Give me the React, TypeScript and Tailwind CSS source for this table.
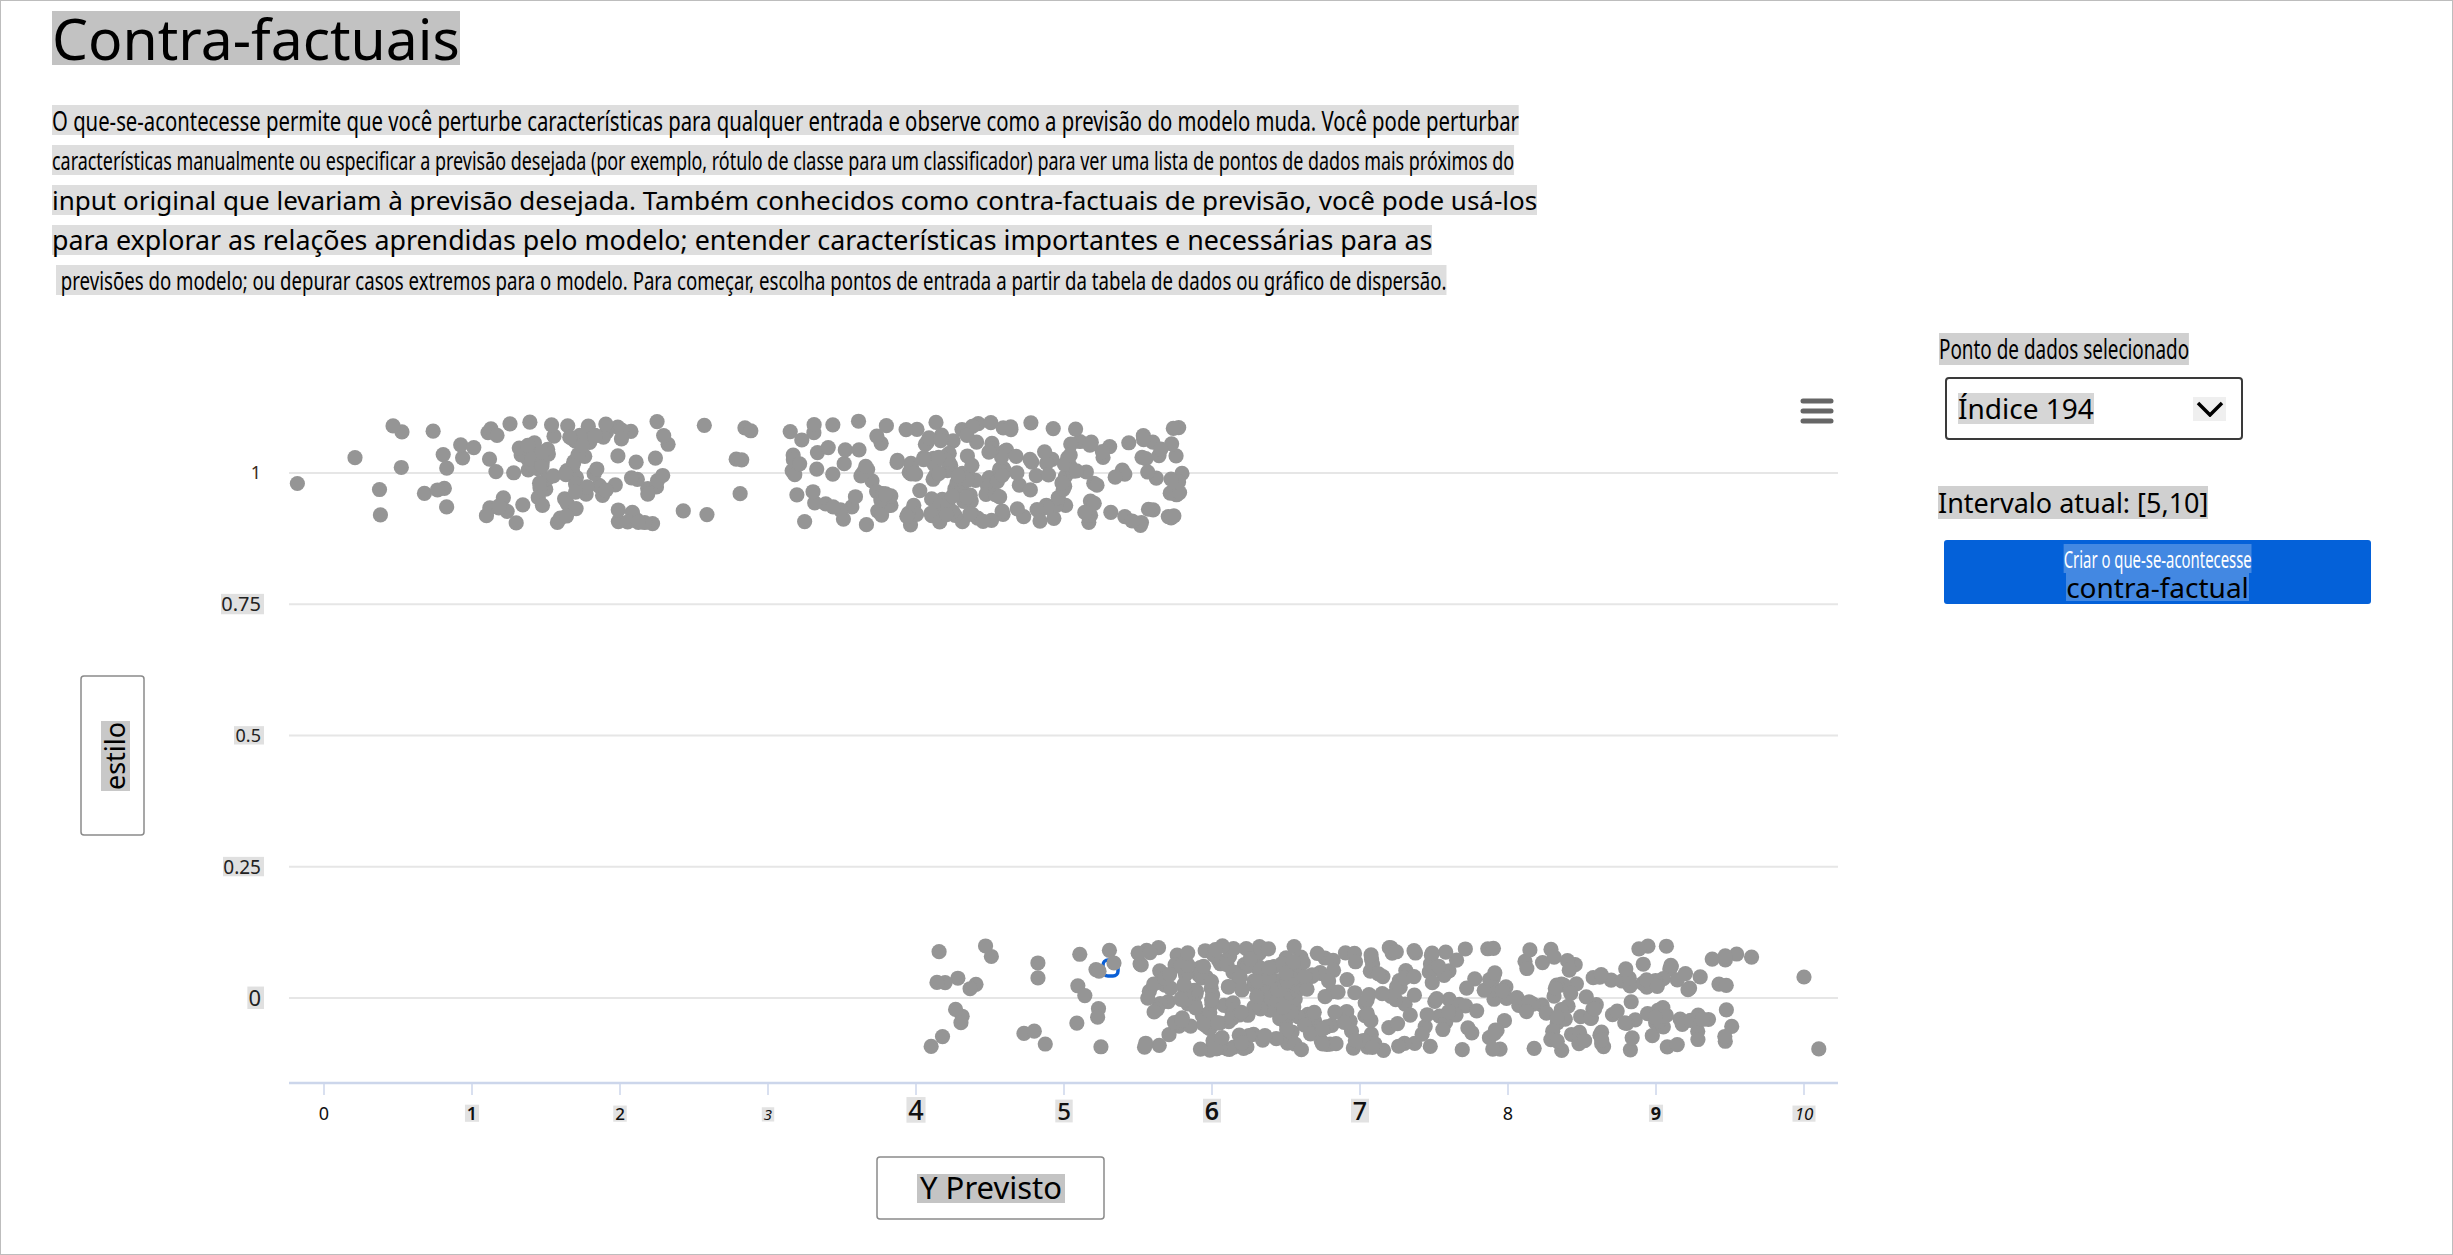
const FONT = { fontFamily: '"Noto Sans", "Open Sans", sans-serif' }

// small seeded random so the scatter is the same on every render
function mulberry32(seed: number) {
  let a = seed
  return () => {
    a = (a + 0x6d2b79f5) | 0
    let t = Math.imul(a ^ (a >>> 15), 1 | a)
    t = (t + Math.imul(t ^ (t >>> 7), 61 | t)) ^ t
    return ((t ^ (t >>> 14)) >>> 0) / 4294967296
  }
}

const X = (v: number) => 324 + 148 * v
const Y = (v: number) => 999 - 525 * v

function buildPoints() {
  const rand = mulberry32(194)
  const jitter = () => (rand() * 2 - 1) * 0.1
  const pts: [number, number][] = []
  // estilo = 1
  pts.push([-0.18, 0.98])
  for (let i = 0; i < 45; i++) pts.push([0.1 + rand() * 2.6, 1 + jitter()])
  for (let i = 0; i < 80; i++) pts.push([0.9 + ((rand() + rand()) / 2) * 1.5, 1 + jitter()])
  for (let i = 0; i < 5; i++) pts.push([2.55 + rand() * 0.35, 1 + jitter()])
  for (let i = 0; i < 160; i++) pts.push([3.15 + rand() * 2.65, 1 + jitter()])
  for (let i = 0; i < 70; i++) pts.push([3.5 + ((rand() + rand()) / 2) * 2.0, 1 + jitter()])
  // estilo = 0
  for (let i = 0; i < 28; i++) pts.push([4.1 + rand() * 1.3, jitter()])
  for (let i = 0; i < 120; i++) pts.push([5.5 + ((rand() + rand()) / 2) * 2.0, jitter()])
  for (let i = 0; i < 300; i++) pts.push([5.5 + rand() * 3.8, jitter()])
  for (let i = 0; i < 14; i++) pts.push([9.2 + rand() * 0.45, jitter()])
  pts.push([10.0, 0.04])
  pts.push([10.1, -0.097])
  return pts
}

const points = buildPoints()

// each line has its own size and horizontal squeeze, as in the reference
const paragraph = [
  {
    text: 'O que-se-acontecesse permite que você perturbe características para qualquer entrada e observe como a previsão do modelo muda. Você pode perturbar',
    cls: 'text-[28px] scale-x-[0.725]',
  },
  {
    text: 'características manualmente ou especificar a previsão desejada (por exemplo, rótulo de classe para um classificador) para ver uma lista de pontos de dados mais próximos do',
    cls: 'text-[26px] scale-x-[0.689]',
  },
  {
    text: 'input original que levariam à previsão desejada. Também conhecidos como contra-factuais de previsão, você pode usá-los',
    cls: 'text-[26px]',
  },
  {
    text: 'para explorar as relações aprendidas pelo modelo; entender características importantes e necessárias para as',
    cls: 'text-[26.8px]',
  },
  {
    text: '\u00a0previsões do modelo; ou depurar casos extremos para o modelo. Para começar, escolha pontos de entrada a partir da tabela de dados ou gráfico de dispersão.',
    cls: 'ml-[4px] text-[26px] scale-x-[0.716]',
  },
]

const yTicks = [
  { label: '1', v: 1, size: 18, bg: false },
  { label: '0.75', v: 0.75, size: 20, bg: true },
  { label: '0.5', v: 0.5, size: 18, bg: true },
  { label: '0.25', v: 0.25, size: 19, bg: true },
  { label: '0', v: 0, size: 22, bg: true },
]

const xTicks = [
  { v: 0, size: 18, weight: 400, bg: false, style: 'normal' },
  { v: 1, size: 18, weight: 600, bg: true, style: 'normal' },
  { v: 2, size: 17, weight: 500, bg: true, style: 'normal' },
  { v: 3, size: 15, weight: 400, bg: true, style: 'italic' },
  { v: 4, size: 27, weight: 500, bg: true, style: 'normal' },
  { v: 5, size: 24, weight: 500, bg: true, style: 'normal' },
  { v: 6, size: 25, weight: 600, bg: true, style: 'normal' },
  { v: 7, size: 25, weight: 500, bg: true, style: 'normal' },
  { v: 8, size: 18, weight: 400, bg: false, style: 'normal' },
  { v: 9, size: 18, weight: 700, bg: true, style: 'normal' },
  { v: 10, size: 17, weight: 400, bg: true, style: 'italic' },
]

function Chart() {
  return (
    <svg width={1900} height={935} viewBox="1 320 1900 935" className="block shrink-0" style={FONT}>
      {/* grid */}
      {[1, 0.75, 0.5, 0.25, 0].map(v => (
        <line key={v} x1={289} x2={1838} y1={Y(v)} y2={Y(v)} stroke="#e6e6e6" strokeWidth={2} />
      ))}

      {/* y labels */}
      {yTicks.map(t => {
        const w = t.label.length === 1 ? t.size * 0.62 : t.label.length * t.size * 0.5
        return (
          <g key={t.label}>
            {t.bg && <rect x={262 - w - 1} y={Y(t.v) - t.size * 0.52} width={w + 3} height={t.size * 1.02} fill="#e0e0e0" />}
            <text x={261} y={Y(t.v) + t.size * 0.36} textAnchor="end" fontSize={t.size} fill={t.bg ? '#222' : '#3b2a1a'}>
              {t.label}
            </text>
          </g>
        )
      })}

      {/* x axis */}
      <line x1={289} x2={1838} y1={1084} y2={1084} stroke="#ccd6eb" strokeWidth={2.5} />
      {xTicks.map(t => {
        const label = String(t.v)
        const w = label.length * t.size * 0.56
        return (
          <g key={t.v}>
            <line x1={X(t.v)} x2={X(t.v)} y1={1084} y2={1096} stroke="#ccd6eb" strokeWidth={1.5} />
            {t.bg && <rect x={X(t.v) - w / 2 - 2} y={1121 - t.size * 0.85} width={w + 4} height={t.size * 0.95} fill="#e2e2e2" />}
            <text x={X(t.v)} y={1121} textAnchor="middle" fontSize={t.size} fontWeight={t.weight} fontStyle={t.style} fill="#111">
              {label}
            </text>
          </g>
        )
      })}

      {/* selected point marker */}
      <rect x={1103} y={961} width={15} height={16} rx={5} fill="none" stroke="#0a5fd6" strokeWidth={3.5} />

      {/* scatter */}
      {points.map(([vx, vy], i) => (
        <circle key={i} cx={X(vx)} cy={Y(vy)} r={7.6} fill="#959595" />
      ))}
      <circle cx={1114} cy={964} r={7.6} fill="#959595" />

      {/* menu */}
      {[402, 412, 422].map(y => (
        <line key={y} x1={1803} x2={1831} y1={y} y2={y} stroke="#666" strokeWidth={5} strokeLinecap="round" />
      ))}

      {/* y axis title */}
      <rect x={81} y={677} width={63} height={159} rx={3} fill="#fff" stroke="#8a8a8a" strokeWidth={1.5} />
      <g transform="rotate(-90 116 757)">
        <rect x={81} y={742} width={70} height={29} fill="#c8c8c8" />
        <text x={116} y={766} textAnchor="middle" fontSize={27} fill="#000">
          estilo
        </text>
      </g>

      {/* x axis title */}
      <rect x={877} y={1158} width={227} height={62} rx={3} fill="#fff" stroke="#8a8a8a" strokeWidth={1.5} />
      <rect x={917} y={1175} width={148} height={29} fill="#c4c4c4" />
      <text x={991} y={1200} textAnchor="middle" fontSize={31} fill="#000">
        Y Previsto
      </text>
    </svg>
  )
}

function SidePanel() {
  return (
    <div className="ml-[38px] pt-[14px] flex flex-col items-start">
      <span className="inline-block origin-left scale-x-[0.7] bg-[#d0d0d0] text-black text-[27px] leading-[32px] whitespace-nowrap">
        Ponto de dados selecionado
      </span>

      <div className="mt-[12px] ml-[6px] w-[298px] h-[63px] border-2 border-[#3a3a3a] rounded-[4px] flex items-center justify-between pl-[11px] pr-[15px]">
        <span className="bg-[#d6d6d6] text-black text-[28px] leading-[31px]">Índice 194</span>
        <span className="w-[33px] h-[24px] bg-[#efefef] flex items-center justify-center">
          <svg width="28" height="16" viewBox="0 0 28 16">
            <path d="M2 2 L14 14 L26 2" fill="none" stroke="#000" strokeWidth="3.5" />
          </svg>
        </span>
      </div>

      <span className="mt-[46px] -ml-[1px] bg-[#d0d0d0] text-black text-[27px] leading-[33px]">
        Intervalo atual: [5,10]
      </span>

      <button className="mt-[21px] ml-[5px] w-[427px] h-[64px] bg-[#0461d9] rounded-[3px] flex flex-col items-center justify-center">
        <span className="inline-block scale-x-[0.62] bg-white/25 text-white text-[24px] leading-[29px] whitespace-nowrap">
          Criar o que-se-acontecesse
        </span>
        <span className="bg-white/25 text-black text-[28px] leading-[28px]">contra-factual</span>
      </button>
    </div>
  )
}

export default function App() {
  return (
    <div className="w-[2453px] h-[1255px] border border-[#bdbdbd] bg-white overflow-hidden" style={FONT}>
      <div className="flex flex-col items-start pl-[51px] pt-[10px]">
        <h1 className="bg-[#c2c2c2] text-black text-[57px] leading-[54px] font-normal">Contra-factuais</h1>
        <div className="mt-[40px] flex flex-col items-start gap-[10px]">
          {paragraph.map(p => (
            <span
              key={p.text}
              className={`inline-block origin-left whitespace-nowrap bg-[#dedede] text-black leading-[30px] ${p.cls}`}
            >
              {p.text}
            </span>
          ))}
        </div>
      </div>

      <div className="flex mt-[24px]">
        <Chart />
        <SidePanel />
      </div>
    </div>
  )
}
